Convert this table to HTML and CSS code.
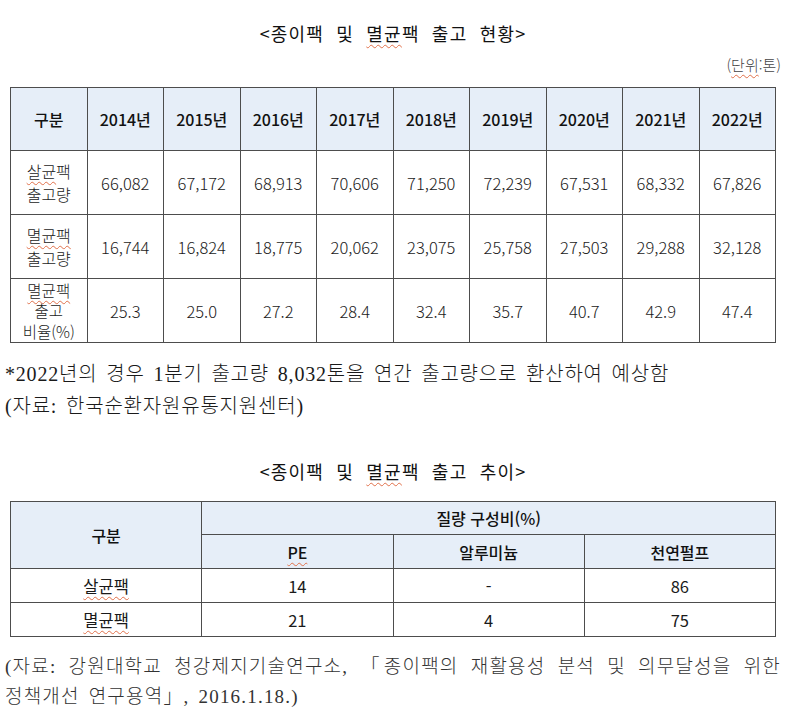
FILE: index.html
```html
<!DOCTYPE html>
<html lang="ko">
<head>
<meta charset="utf-8">
<title>종이팩 및 멸균팩 출고 현황</title>
<link rel="stylesheet" href="styles.css">
</head>
<body>
<div class="page">
  <h1 class="title">&lt;종이팩 및 <span class="sp">멸균</span>팩 출고 현황&gt;</h1>
  <p class="unit">(<span class="sp">단위</span>:톤)</p>
  <table class="t1">
    <thead>
      <tr>
        <th>구분</th><th>2014년</th><th>2015년</th><th>2016년</th><th>2017년</th><th>2018년</th><th>2019년</th><th>2020년</th><th>2021년</th><th>2022년</th>
      </tr>
    </thead>
    <tbody>
      <tr>
        <td class="lab"><span class="sp">살균</span>팩<br>출고량</td><td>66,082</td><td>67,172</td><td>68,913</td><td>70,606</td><td>71,250</td><td>72,239</td><td>67,531</td><td>68,332</td><td>67,826</td>
      </tr>
      <tr>
        <td class="lab"><span class="sp">멸균팩</span><br>출고량</td><td>16,744</td><td>16,824</td><td>18,775</td><td>20,062</td><td>23,075</td><td>25,758</td><td>27,503</td><td>29,288</td><td>32,128</td>
      </tr>
      <tr>
        <td class="lab lab3"><span class="sp">멸균팩</span><br>출고<br>비율(%)</td><td>25.3</td><td>25.0</td><td>27.2</td><td>28.4</td><td>32.4</td><td>35.7</td><td>40.7</td><td>42.9</td><td>47.4</td>
      </tr>
    </tbody>
  </table>
  <p class="note note-first">*2022년의 경우 1분기 출고량 8,032톤을 연간 출고량으로 환산하여 예상함</p>
  <p class="note">(자료: 한국순환자원유통지원센터)</p>

  <h2 class="title title2">&lt;종이팩 및 <span class="sp">멸균</span>팩 출고 추이&gt;</h2>
  <table class="t2">
    <thead>
      <tr>
        <th rowspan="2">구분</th><th colspan="3">질량 구성비(%)</th>
      </tr>
      <tr>
        <th><span class="sp">PE</span></th><th>알루미늄</th><th>천연펄프</th>
      </tr>
    </thead>
    <tbody>
      <tr><td><span class="sp">살균팩</span></td><td>14</td><td>-</td><td>86</td></tr>
      <tr><td><span class="sp">멸균팩</span></td><td>21</td><td>4</td><td>75</td></tr>
    </tbody>
  </table>
  <p class="src src-line1">(자료: 강원대학교 청강제지기술연구소, 「종이팩의 재활용성 분석 및 의무달성을 위한</p>
  <p class="src">정책개선 연구용역」, 2016.1.18.)</p>
</div>
</body>
</html>
```

FILE: styles.css
```css
html, body {
  margin: 0;
  padding: 0;
  background: #ffffff;
}

body {
  font-family: "Noto Sans CJK KR", "Noto Sans", sans-serif;
  color: #1a1a1a;
}

.page {
  width: 787px;
  padding: 0 6px 0 5px;
  box-sizing: border-box;
}

.title {
  margin: 20px 0 0;
  font-size: 18px;
  font-weight: 400;
  line-height: 26px;
  text-align: center;
  letter-spacing: 1.2px;
  word-spacing: 6px;
  color: #111;
}

.title2 {
  margin-top: 36px;
}

.sp {
  text-decoration: underline wavy #e0704a;
  text-decoration-thickness: 1px;
  text-underline-offset: 3px;
}

.unit {
  margin: 9px 0 0;
  font-size: 15px;
  line-height: 20px;
  text-align: right;
  color: #444;
  font-weight: 300;
}

table {
  border-collapse: collapse;
  margin-left: 5px;
  width: 766px;
  table-layout: fixed;
}

th, td {
  border: 1px solid #4d4d4d;
  text-align: center;
  vertical-align: middle;
  padding: 0;
}

th {
  background: #e6eef8;
  font-weight: 500;
  font-size: 16px;
  color: #111;
}

td {
  font-size: 16.5px;
  font-weight: 300;
  color: #1a1a1a;
}

.t1 {
  margin-top: 12px;
}

.t1 thead tr {
  height: 63px;
}

.t1 tbody tr {
  height: 64px;
}

.t1 .lab {
  font-size: 16px;
  line-height: 23px;
}

.t1 .lab3 {
  font-size: 15.5px;
  line-height: 20.5px;
}

.note {
  margin: 0;
  font-family: "Liberation Serif", "Noto Sans CJK KR", serif;
  font-size: 20px;
  font-weight: 300;
  line-height: 32px;
  letter-spacing: 0.8px;
  word-spacing: 3px;
  color: #1a1a1a;
  white-space: nowrap;
}

.note-first {
  margin-top: 15px;
}

.t2 {
  margin-top: 17px;
}

.t2 tr {
  height: 34px;
}

.t2 thead tr:first-child {
  height: 33px;
}

.t2 td {
  font-size: 16.5px;
  font-weight: 400;
}

.src {
  margin: 0;
  font-family: "Liberation Serif", "Noto Sans CJK KR", serif;
  font-size: 19px;
  line-height: 30px;
  letter-spacing: 1.2px;
  word-spacing: 3px;
  color: #333;
  font-weight: 300;
}

.src-line1 {
  margin-top: 15px;
  text-align: justify;
  text-align-last: justify;
  text-justify: inter-word;
  white-space: nowrap;
}
```
